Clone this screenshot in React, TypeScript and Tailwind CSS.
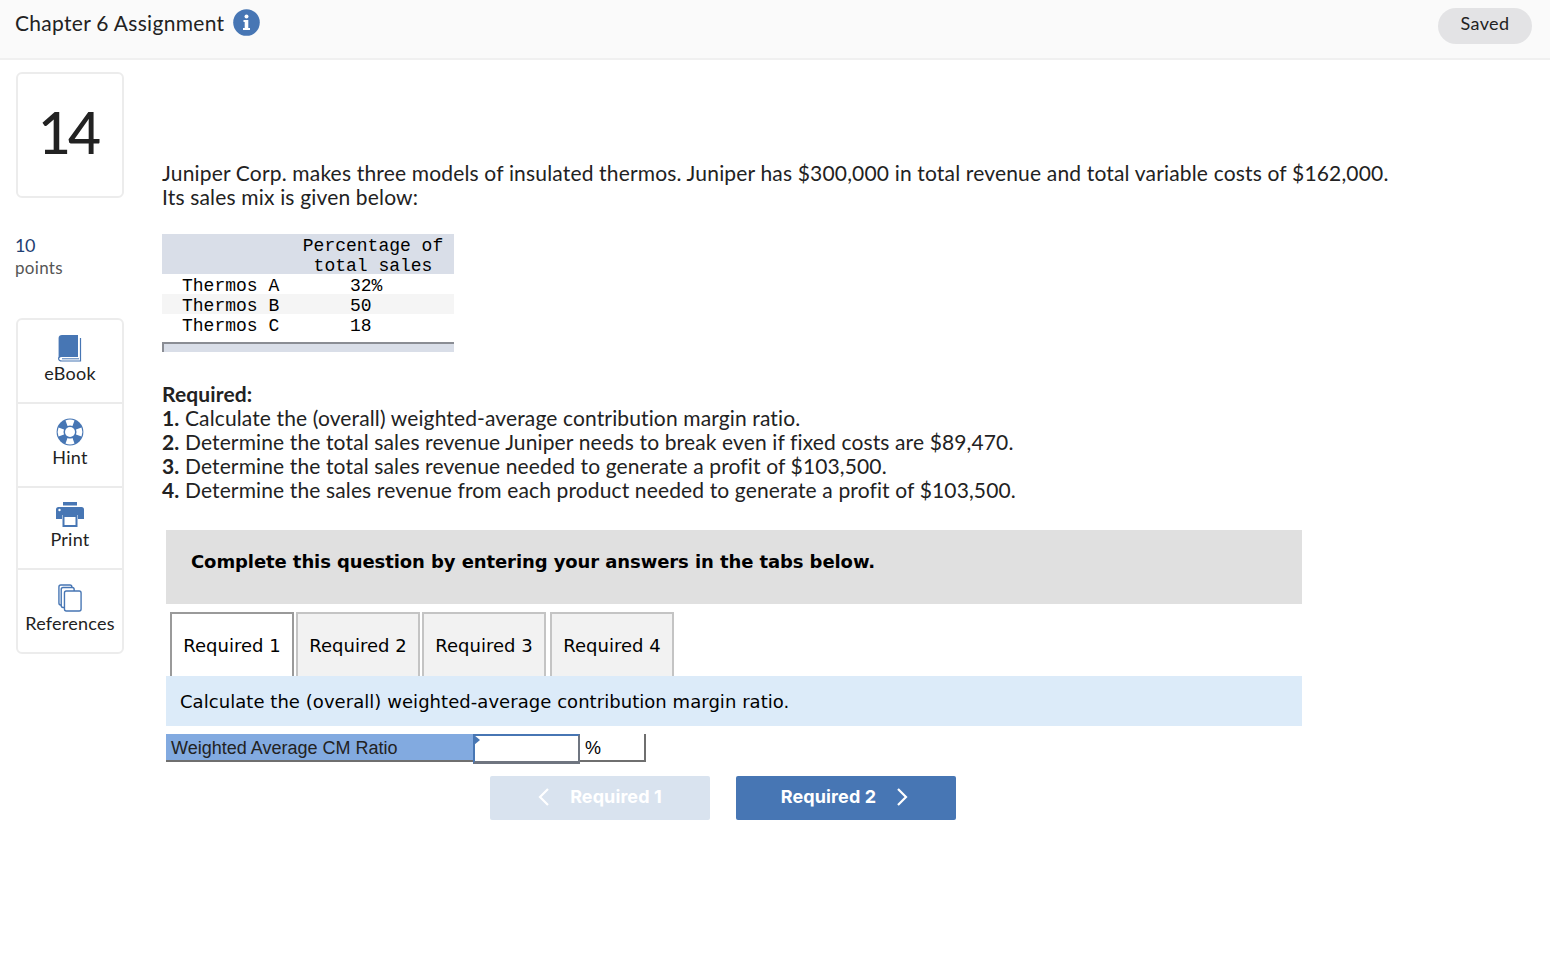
import React from "react";

const P = "font-['Lato','Noto_Sans',sans-serif] [font-variant-ligatures:none]";

function Tool({ label, icon, h, pt, last }: { label: string; icon: React.ReactNode; h: string; pt: string; last?: boolean }) {
  return (
    <div className={`flex flex-col items-center ${pt} ${h} ${last ? "" : "border-b-2 border-[#ebebeb]"}`}>
      <div className="h-[28px] flex items-center justify-center">{icon}</div>
      <div className="text-[18px] tracking-[0.25px] leading-[20px] mt-[1px] text-[#222]">{label}</div>
    </div>
  );
}

const Book = () => (
  <svg width="26" height="28" viewBox="0 0 26 28">
    <path d="M5 1h16v22H5c-2 0-3 .6-3.400 1.500V4c0-2 1.400-3 3.400-3z" fill="#4776b4" />
    <path d="M23.500 4v23H5c-2 0-3.400-1-3.400-2.500S3 22.500 5 22.500" fill="none" stroke="#4776b4" strokeWidth="1.200" />
    <path d="M5 24.800h17" stroke="#4776b4" strokeWidth="1" />
  </svg>
);
const Hint = () => (
  <svg width="28" height="28" viewBox="0 0 28 28">
    <circle cx="14" cy="14" r="13.400" fill="#4776b4" />
    <circle cx="14" cy="14" r="5" fill="#fff" />
    <path d="M9.500 2.500a12 12 0 0 1 9 0l-2 5.500a6.500 6.500 0 0 0-5 0zM9.500 25.500a12 12 0 0 0 9 0l-2-5.500a6.500 6.500 0 0 1-5 0zM2.500 9.500a12 12 0 0 0 0 9l5.500-2a6.500 6.500 0 0 1 0-5zM25.500 9.500a12 12 0 0 1 0 9l-5.500-2a6.500 6.500 0 0 0 0-5z" fill="#fff" />
  </svg>
);
const Printer = () => (
  <svg width="28" height="26" viewBox="0 0 28 26">
    <rect x="7" y="1" width="14" height="3.500" fill="#4776b4" />
    <path d="M2.500 6h23A2.500 2.500 0 0 1 28 8.500V18h-6v-4H6v4H0V8.500A2.500 2.500 0 0 1 2.500 6z" fill="#4776b4" />
    <circle cx="3.500" cy="9" r="1.200" fill="#fff" />
    <path d="M7.500 15h13v10h-13z" fill="#fff" stroke="#4776b4" strokeWidth="2" />
  </svg>
);
const Refs = () => (
  <svg width="24" height="28" viewBox="0 0 26 28" preserveAspectRatio="none" fill="#fff" stroke="#4776b4" strokeWidth="1.500">
    <path d="M3 1h10c1 0 2 1 2 2v16c0 1-1 2-2 2H3c-1 0-2-1-2-2V3c0-1 1-2 2-2z" />
    <path d="M5.500 3.500h10c1 0 2 1 2 2v16c0 1-1 2-2 2h-10c-1 0-2-1-2-2v-16c0-1 1-2 2-2z" />
    <path d="M9 7h14c1 0 2 1 2 2v16c0 1-1 2-2 2H9c-1 0-2-1-2-2V9c0-1 1-2 2-2z" />
  </svg>
);

function Tab({ label, active, cls }: { label: string; active?: boolean; cls?: string }) {
  return (
    <div
      className={`w-[124px] h-[64px] border-2 border-b-0 pt-[19px] text-center text-[18px] leading-[26px] text-black ${cls ?? ""} ${
        active ? "bg-white border-[#9a9a9a]" : "bg-[#f2f2f2] border-[#c4c4c4]"
      }`}
    >
      {label}
    </div>
  );
}

export default function App() {
  return (
    <div className={`w-[1550px] h-[962px] bg-white text-[#222] ${P} overflow-hidden`}>
      <header className="h-[60px] bg-[#fafafa] border-b-2 border-[#f0f0f0] flex justify-between pl-[15px] pr-[18px]">
        <div className="flex items-start pt-[10px] gap-[9px]">
          <span className="text-[21px] tracking-[0.3px] leading-[26px]">Chapter 6 Assignment</span>
          <svg width="27" height="27" viewBox="0 0 27 27" className="-mt-[1px]">
            <circle cx="13.500" cy="13.500" r="13.300" fill="#4776b4" />
            <circle cx="13.500" cy="7.500" r="2" fill="#fff" />
            <path d="M10.500 11h4.800v8h1.700v2h-7v-2h1.700v-6h-1.200z" fill="#fff" />
          </svg>
        </div>
        <div className="mt-[8px] w-[94px] h-[36px] rounded-[18px] bg-[#e3e3e5] text-[18px] tracking-[0.4px] leading-[31px] text-center">Saved</div>
      </header>

      <div className="flex">
        <aside className="w-[146px] pl-[16px] shrink-0">
          <div className="mt-[12px] w-[108px] h-[126px] border-2 border-[#ececec] rounded-[6px] flex items-center justify-center pb-[5px] pr-[4px] text-[57px] font-medium tracking-[-3px] leading-none text-[#222]">
            14
          </div>
          <div className="mt-[35px] -ml-[1px] text-[18px] tracking-[-0.4px] leading-[24px] text-[#1f3f73]">10</div>
          <div className="-ml-[1px] text-[17px] tracking-[0.3px] leading-[22px] text-[#555]">points</div>
          <div className="mt-[39px] w-[108px] border-2 border-[#ececec] rounded-[6px]">
            <Tool label="eBook" icon={<Book />} h="h-[84px]" pt="pt-[14px]" />
            <Tool label="Hint" icon={<Hint />} h="h-[84px]" pt="pt-[14px]" />
            <Tool label="Print" icon={<Printer />} h="h-[82px]" pt="pt-[12px]" />
            <Tool label="References" icon={<Refs />} h="h-[82px]" pt="pt-[14px]" last />
          </div>
        </aside>

        <main className="flex-1 pl-[16px]">
          <p className="mt-[101px] w-[1232px] text-[21px] tracking-[0.17px] leading-[24px]">
            Juniper Corp. makes three models of insulated thermos. Juniper has $300,000 in total revenue and total variable costs of $162,000. Its sales mix is given below:
          </p>

          <div className="mt-[25px] w-[292px] font-['Liberation_Mono',monospace] text-[18px] leading-[20px] text-black">
            <div className="h-[40px] bg-[#d9dee8] flex pt-[2px]">
              <div className="w-[130px]" />
              <div className="w-[162px] text-center">Percentage of<br />total sales</div>
            </div>
            <div className="h-[20px] flex pt-[2px]"><div className="w-[188px] pl-[20px]">Thermos A</div><div>32%</div></div>
            <div className="h-[20px] flex pt-[2px] bg-[#f5f5f5]"><div className="w-[188px] pl-[20px]">Thermos B</div><div>50</div></div>
            <div className="h-[20px] flex pt-[2px]"><div className="w-[188px] pl-[20px]">Thermos C</div><div>18</div></div>
            <div className="mt-[8px] h-[10px] bg-[#d9dee8] border-t-2 border-l-2 border-[#8a8d94]" />
          </div>

          <div className="mt-[30px] text-[21px] tracking-[0.13px] leading-[24px]">
            <div className="font-bold">Required:</div>
            <div><b>1.</b> Calculate the (overall) weighted-average contribution margin ratio.</div>
            <div><b>2.</b> Determine the total sales revenue Juniper needs to break even if fixed costs are $89,470.</div>
            <div><b>3.</b> Determine the total sales revenue needed to generate a profit of $103,500.</div>
            <div><b>4.</b> Determine the sales revenue from each product needed to generate a profit of $103,500.</div>
          </div>

          <div className="ml-[4px] w-[1136px] font-['DejaVu_Sans',sans-serif] text-black">
            <div className="mt-[28px] h-[74px] bg-[#e0e0e0] pl-[25px] pt-[19px] text-[18px] tracking-[-0.09px] leading-[26px] font-bold">
              Complete this question by entering your answers in the tabs below.
            </div>
            <div className="mt-[8px] pl-[4px] flex gap-[2px]">
              <Tab label="Required 1" active />
              <Tab label="Required 2" />
              <Tab label="Required 3" cls="mr-[2px]" />
              <Tab label="Required 4" />
            </div>
            <div className="h-[50px] bg-[#dcebf9] pl-[14px] pt-[13px] text-[18px] tracking-[0.05px] leading-[26px]">
              Calculate the (overall) weighted-average contribution margin ratio.
            </div>
            <div className="mt-[8px] flex h-[28px] font-['Liberation_Sans',sans-serif] text-[18px] leading-[28px]">
              <div className="w-[307px] bg-[#82aae0] border-b-2 border-[#6f6f6f] pl-[5px] text-[#222]">Weighted Average CM Ratio</div>
              <div className="relative w-[107px] h-[30px] border-2 border-[#4776b4] border-b-[3px] border-b-[#6f7580] bg-white border-r-[#6f7580]">
                <span className="absolute -left-[1px] -top-[1px] w-0 h-0 border-y-[5px] border-y-transparent border-l-[6px] border-l-[#4776b4]" />
              </div>
              <div className="w-[66px] border-r-2 border-b-2 border-[#6f6f6f] pl-[5px]">%</div>
            </div>
            <div className="mt-[14px] ml-[324px] flex gap-[26px] font-['Inter',sans-serif] text-[18px] leading-[22px] font-bold text-white">
              <div className="w-[220px] h-[44px] rounded-[2px] bg-[#d9e3ef] flex items-center justify-center gap-[20px]">
                <svg width="12" height="20" viewBox="0 0 12 20" fill="none" stroke="#fff" strokeWidth="2.200" className="-mt-[2px]"><path d="M10 2 2 10l8 8" /></svg>
                <span className="-mt-[2px] tracking-[0.1px]">Required 1</span>
              </div>
              <div className="w-[220px] h-[44px] rounded-[2px] bg-[#4776b4] flex items-center justify-center gap-[20px] pr-[3px]">
                <span className="-mt-[2px] tracking-[0.1px]">Required 2</span>
                <svg width="12" height="20" viewBox="0 0 12 20" fill="none" stroke="#fff" strokeWidth="2.200" className="-mt-[2px]"><path d="m2 2 8 8-8 8" /></svg>
              </div>
            </div>
          </div>
        </main>
      </div>
    </div>
  );
}
